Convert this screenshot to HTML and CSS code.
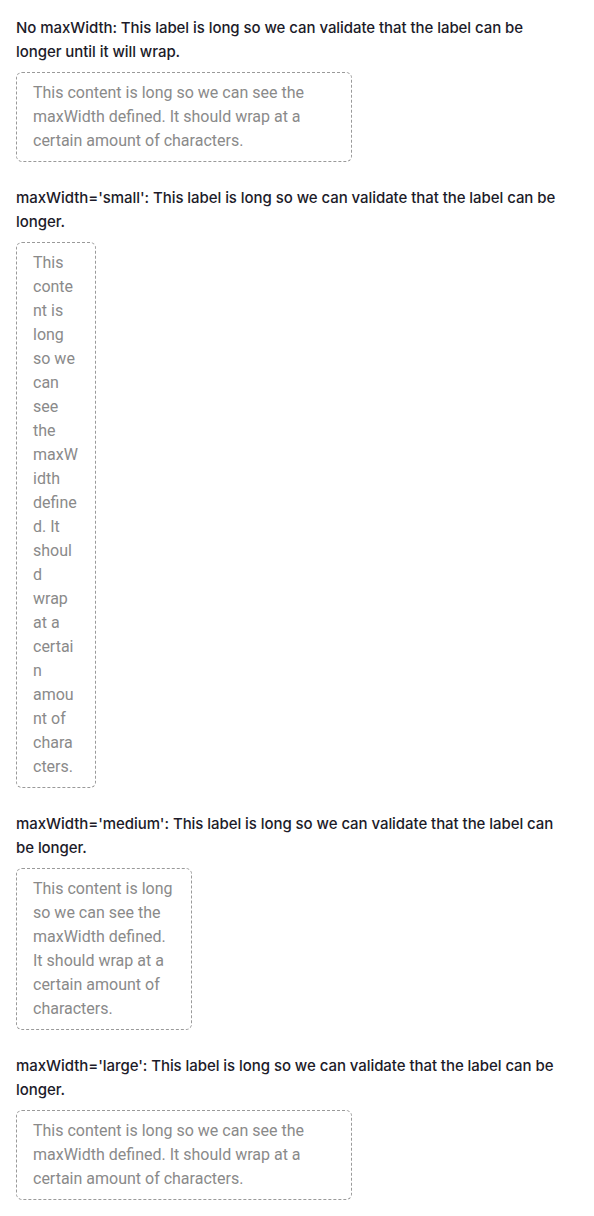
FILE: index.html
```html
<!DOCTYPE html>
<html>
<head>
<meta charset="utf-8">
<link rel="stylesheet" href="styles.css">
</head>
<body>
<div class="page">
  <div class="field">
    <div class="label">No maxWidth: This label is long so we can validate that the label can be longer until it will wrap.</div>
    <div class="box box-default">This content is long so we can see the maxWidth defined. It should wrap at a certain amount of characters.</div>
  </div>
  <div class="field">
    <div class="label">maxWidth='small': This label is long so we can validate that the label can be longer.</div>
    <div class="box box-small">This content is long so we can see the maxWidth defined. It should wrap at a certain amount of characters.</div>
  </div>
  <div class="field">
    <div class="label">maxWidth='medium': This label is long so we can validate that the label can be longer.</div>
    <div class="box box-medium">This content is long so we can see the maxWidth defined. It should wrap at a certain amount of characters.</div>
  </div>
  <div class="field">
    <div class="label">maxWidth='large': This label is long so we can validate that the label can be longer.</div>
    <div class="box box-large">This content is long so we can see the maxWidth defined. It should wrap at a certain amount of characters.</div>
  </div>
</div>
</body>
</html>
```
FILE: styles.css
```css
html, body {
  margin: 0;
  padding: 0;
  background: #ffffff;
}
.page {
  padding: 16px;
  display: flex;
  flex-direction: column;
  gap: 24px;
}
.field {
  display: flex;
  flex-direction: column;
  gap: 8px;
  align-items: flex-start;
}
.label {
  max-width: 556px;
  font-family: Inter, "Noto Sans", sans-serif;
  font-weight: 500;
  font-size: 15px;
  line-height: 24px;
  letter-spacing: -0.06px;
  color: #1c1b29;
}
.box {
  box-sizing: border-box;
  border: 1px dashed #9a9a9a;
  border-radius: 6px;
  padding: 8px 16px;
  font-family: Roboto, "Liberation Sans", sans-serif;
  font-size: 16px;
  line-height: 24px;
  color: #8a8a8a;
  overflow-wrap: break-word;
}
.box-default { width: 336px; }
.box-small { width: 80px; }
.box-medium { width: 176px; }
.box-large { width: 336px; }
```
